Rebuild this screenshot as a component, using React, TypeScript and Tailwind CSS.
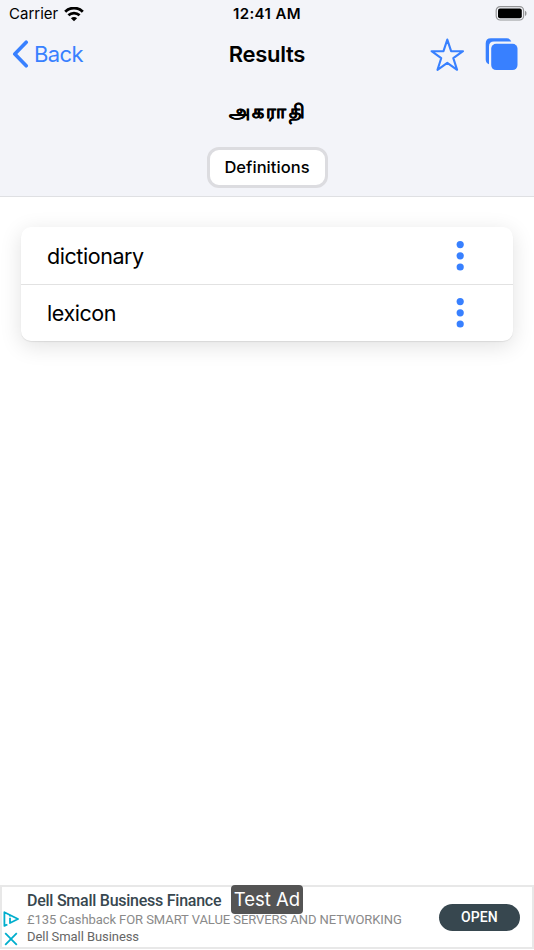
import { ReactNode } from "react";

const definitions = ["dictionary", "lexicon"];

const WifiIcon = () => (
  <svg width="20" height="15" viewBox="0 0 20 15" fill="none" aria-hidden="true">
    <path d="M1.2 4.7C6.2-.1 13.8-.1 18.8 4.7" stroke="#000" strokeWidth="2.9" />
    <path d="M4.4 8.3C7.6 5.3 12.4 5.3 15.6 8.3" stroke="#000" strokeWidth="2.7" />
    <path d="M10 14.2 6.9 11.2C8.7 9.5 11.3 9.5 13.1 11.2Z" fill="#000" />
  </svg>
);

const BatteryIcon = () => (
  <svg width="32" height="15" viewBox="0 0 32 15" fill="none" aria-hidden="true">
    <rect x="1.2" y=".6" width="27.4" height="13.4" rx="4" stroke="#949597" strokeWidth="1.2" />
    <rect x="3" y="2.4" width="23.8" height="9.8" rx="2" fill="#000" />
    <path d="M30 4.8V10C32 9.2 32 5.6 30 4.8Z" fill="#949597" />
  </svg>
);

const StarIcon = () => (
  <svg width="36" height="34" viewBox="0 0 36 34" fill="none" aria-hidden="true">
    <path
      d="M18.3 1.6 22.1 13.2H34L24.3 20.2L28.1 31.8L18.3 24.8L8.5 31.8L12.2 20.2L2.6 13.2H14.5Z"
      stroke="#3880ff"
      strokeWidth="2.1"
      strokeLinejoin="round"
    />
  </svg>
);

const CopyIcon = () => (
  <svg width="34" height="34" viewBox="0 0 34 34" fill="#3880ff" aria-hidden="true">
    <path d="M5.8.3H21.8Q25 .3 26.3 3.5H9Q4 3.5 4 8.5V26.3Q.7 25 .7 21.5V5.5Q.7.3 5.8.3Z" />
    <rect x="6.2" y="5.8" width="26.3" height="26.3" rx="5" />
  </svg>
);

const IconButton = ({ label, children }: { label: string; children: ReactNode }) => (
  <button aria-label={label} className="flex items-center justify-center">
    {children}
  </button>
);

const DefinitionRow = ({ text }: { text: string }) => (
  <li className="flex h-[57px] items-center justify-between border-t border-[#e2e2e2] pr-[49px] pb-px pl-[26px] first:border-t-0 first:pb-0">
    <span className="text-[21.5px] leading-7 tracking-[-0.44px]">{text}</span>
    <IconButton label={`More about ${text}`}>
      <svg width="8" height="30" viewBox="0 0 8 30" fill="#3880ff" aria-hidden="true">
        <circle cx="4.2" cy="3.6" r="3.6" />
        <circle cx="4.2" cy="14.8" r="3.6" />
        <circle cx="4.2" cy="26" r="3.6" />
      </svg>
    </IconButton>
  </li>
);

const StatusBar = () => (
  <div className="grid h-[27px] grid-cols-3 items-center px-[7px]">
    <div className="flex items-center gap-[6px] pt-px pl-[2px] text-[15px]">
      <span className="pt-px">Carrier</span>
      <WifiIcon />
    </div>
    <span className="pt-[2px] text-center text-[15px] font-semibold tracking-[0.4px]">12:41 AM</span>
    <div className="flex justify-end">
      <BatteryIcon />
    </div>
  </div>
);

const Header = () => (
  <header className="h-[197px] border-b border-[#dfe0e3] bg-[#f3f4f9]">
    <StatusBar />
    <nav className="grid h-[54px] grid-cols-3 items-center px-3">
      <button className="flex items-center gap-[5px] text-[22px] tracking-[-0.6px] text-[#3880ff]">
        <svg width="17" height="28" viewBox="0 0 17 28" fill="none" aria-hidden="true">
          <path
            d="M14.2 2.2 2.8 14 14.2 25.8"
            stroke="currentColor"
            strokeWidth="3.6"
            strokeLinecap="round"
            strokeLinejoin="round"
          />
        </svg>
        Back
      </button>
      <h1 className="pt-px text-center text-[22px] font-semibold tracking-[-0.3px]">Results</h1>
      <div className="flex justify-end gap-5 pt-px pr-[3px]">
        <IconButton label="Favourite">
          <StarIcon />
        </IconButton>
        <IconButton label="Copy">
          <CopyIcon />
        </IconButton>
      </div>
    </nav>
    <h2 className="flex h-[66px] items-center justify-center pb-[3px] pl-[2px] text-[19px] font-bold tracking-[2.1px] [-webkit-text-stroke:0.3px_black]">
      அகராதி
    </h2>
    <button className="mx-auto flex h-[41px] w-[121px] items-center justify-center rounded-xl border-[3px] border-[#dcdce0] bg-white text-[16.5px] font-medium tracking-[0.05px]">
      Definitions
    </button>
  </header>
);

const AdBanner = () => (
  <aside className="relative flex h-16 items-center border-2 border-[#e8e8e8] bg-white font-['Roboto',sans-serif]">
    <div className="flex w-[25px] flex-col items-center gap-[5px] self-end pr-[7px] pb-px">
      <svg width="16" height="16" viewBox="0 0 16 16" fill="none" stroke="#00aecd" strokeWidth="1.8" aria-hidden="true">
        <path d="M4.4 13.5 1.4 14.8V1.2L15 8 7 12V6.8" strokeLinejoin="round" />
        <path d="M7 3.9V5.6" />
      </svg>
      <svg width="14" height="14" viewBox="0 0 14 14" fill="none" stroke="#00aecd" strokeWidth="1.8" aria-hidden="true">
        <path d="M1.2 1.2 12.8 12.8M12.8 1.2 1.2 12.8" />
      </svg>
    </div>
    <div className="flex-1 pt-px whitespace-nowrap">
      <p className="text-[16px] leading-5 font-medium tracking-[-0.25px] text-[#37474f]">
        Dell Small Business Finance
      </p>
      <p className="text-[13px] leading-[18px] tracking-[-0.07px] text-[#8a8a8a]">
        £135 Cashback FOR SMART VALUE SERVERS AND NETWORKING
      </p>
      <p className="text-[13px] leading-4 tracking-[-0.07px] text-[#666]">Dell Small Business</p>
    </div>
    <button className="mr-3 h-[27px] w-[81px] rounded-full bg-[#37474f] text-[14px] font-medium tracking-[0.1px] text-white">
      OPEN
    </button>
    <span className="absolute -top-[2px] left-[229px] flex h-[29px] w-[72px] items-center justify-center rounded-[4px] bg-[#545454] pt-px font-['Inter',sans-serif] text-[18.5px] whitespace-nowrap text-white">
      Test Ad
    </span>
  </aside>
);

export default function App() {
  return (
    <div className="flex h-[950px] w-[534px] flex-col overflow-hidden bg-white pb-px font-['Inter','Noto_Sans',sans-serif] text-black">
      <Header />
      <main className="flex-1 px-[21px] pt-[30px]">
        <ul className="rounded-[10px] bg-white shadow-[0_5px_22px_rgba(0,0,0,0.12),0_1px_1px_rgba(0,0,0,0.08)]">
          {definitions.map((definition) => (
            <DefinitionRow key={definition} text={definition} />
          ))}
        </ul>
      </main>
      <AdBanner />
    </div>
  );
}
